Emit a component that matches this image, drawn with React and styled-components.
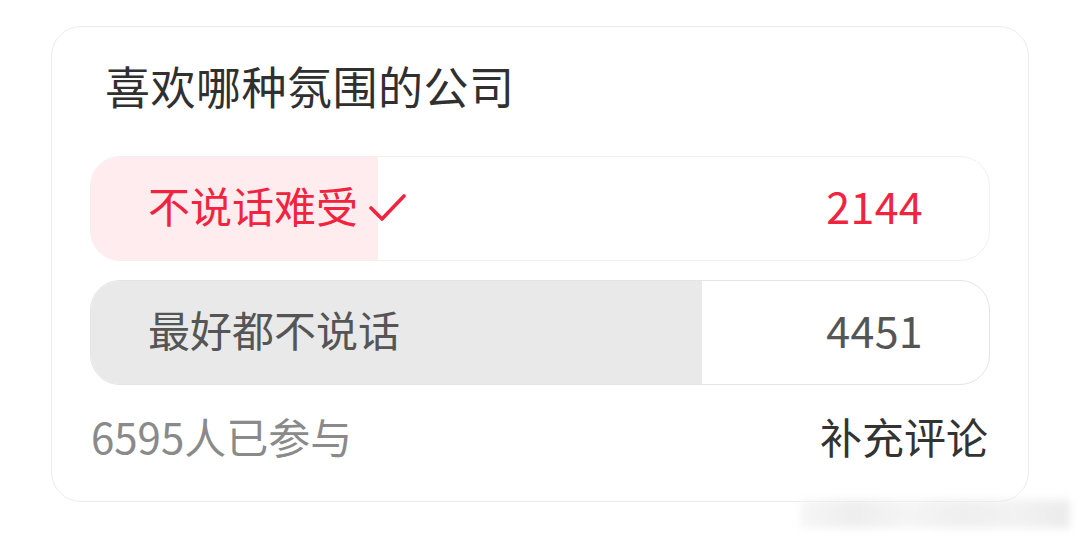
import React from "react";
import styled, { createGlobalStyle } from "styled-components";

const Global = createGlobalStyle`
  html, body { margin: 0; padding: 0; background: #ffffff; }
  body { font-family: "Noto Sans CJK SC", "Noto Sans", sans-serif; }
`;

const Page = styled.div`
  width: 1080px;
  height: 542px;
  padding: 26px 0 0 51px;
  box-sizing: border-box;
  display: flex;
  flex-direction: column;
  position: relative;
  overflow: hidden;
`;

const Card = styled.div`
  width: 978px;
  height: 476px;
  box-sizing: border-box;
  border: 1.5px solid #ececec;
  border-radius: 30px;
  padding: 29px 38px 0 38px;
  display: flex;
  flex-direction: column;
`;

const Title = styled.div`
  font-size: 45px;
  line-height: 60px;
  height: 60px;
  color: #303030;
  padding-left: 15px;
  letter-spacing: 0.5px;
  margin-bottom: 40px;
`;

const Options = styled.div`
  display: flex;
  flex-direction: column;
  gap: 19px;
`;

const Row = styled.div`
  position: relative;
  height: 105px;
  box-sizing: border-box;
  border: 1px solid ${(p) => (p.$selected ? "#f5eeef" : "#e4e4e4")};
  border-radius: 30px;
  overflow: hidden;
  display: flex;
  align-items: center;
  justify-content: space-between;
  padding: 0 66px 7px 57px;
  background: #ffffff;
`;

const Fill = styled.div`
  position: absolute;
  left: 0;
  top: 0;
  bottom: 0;
  background: ${(p) => (p.$selected ? "#ffecee" : "#e9e9e9")};
`;

const Label = styled.div`
  position: relative;
  display: flex;
  align-items: center;
  gap: 10px;
  font-size: 42px;
  line-height: 1;
  color: ${(p) => (p.$selected ? "#f1243f" : "#555555")};
`;

const CheckBox = styled.span`
  display: inline-flex;
  margin-top: 6px;
`;

const Count = styled.div`
  position: relative;
  font-size: 43px;
  line-height: 1;
  letter-spacing: 0.3px;
  color: ${(p) => (p.$selected ? "#f1243f" : "#555555")};
`;

const Footer = styled.div`
  margin-top: 20px;
  height: 60px;
  display: flex;
  align-items: center;
  justify-content: space-between;
  padding: 0 2px 0 1px;
`;

const Joined = styled.div`
  font-size: 42px;
  color: #8a8a8a;
`;

const Comment = styled.div`
  font-size: 42px;
  color: #333333;
`;

const Watermark = styled.div`
  position: absolute;
  left: 800px;
  top: 500px;
  width: 270px;
  height: 28px;
  background: linear-gradient(90deg, #f4f4f4, #e8e8e8 20%, #f2f2f2 40%, #eaeaea 60%, #eeeeee 80%, #e4e4e4);
  filter: blur(4px);
  opacity: 0.75;
`;

const Check = () => (
  <svg width="38" height="30" viewBox="0 0 38 30" fill="none">
    <path d="M3 15 L14 26 L36 3" stroke="#f1243f" strokeWidth="3.6" strokeLinecap="round" strokeLinejoin="round" />
  </svg>
);

const options = [
  { text: "不说话难受", count: 2144, percent: 32, selected: true },
  { text: "最好都不说话", count: 4451, percent: 68, selected: false },
];

export default function App() {
  const total = options.reduce((s, o) => s + o.count, 0);
  return (
    <>
      <Global />
      <Page>
        <Card>
          <Title>喜欢哪种氛围的公司</Title>
          <Options>
            {options.map((o) => (
              <Row key={o.text} $selected={o.selected}>
                <Fill $selected={o.selected} style={{ width: `${o.percent}%` }} />
                <Label $selected={o.selected}>
                  {o.text}
                  {o.selected && (
                    <CheckBox>
                      <Check />
                    </CheckBox>
                  )}
                </Label>
                <Count $selected={o.selected}>{o.count}</Count>
              </Row>
            ))}
          </Options>
          <Footer>
            <Joined>{total}人已参与</Joined>
            <Comment>补充评论</Comment>
          </Footer>
        </Card>
        <Watermark />
      </Page>
    </>
  );
}
